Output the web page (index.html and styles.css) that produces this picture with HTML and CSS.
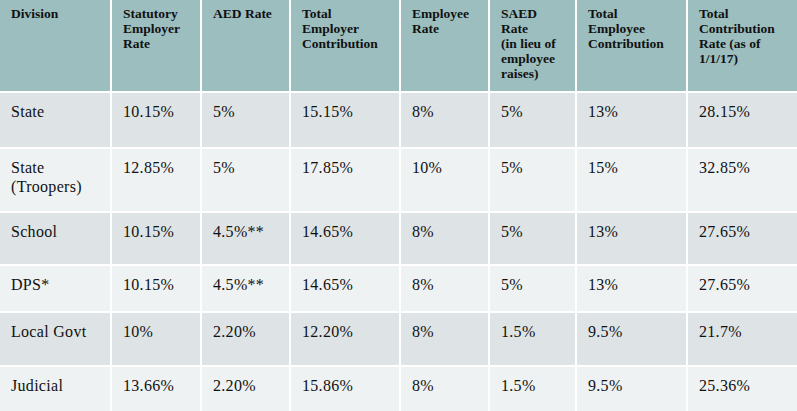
FILE: index.html
```html
<!DOCTYPE html>
<html>
<head>
<meta charset="utf-8">
<link rel="stylesheet" href="styles.css">
</head>
<body>
<div class="table">
  <div class="cell head">Division</div>
  <div class="cell head">Statutory Employer Rate</div>
  <div class="cell head">AED Rate</div>
  <div class="cell head">Total Employer Contribution</div>
  <div class="cell head">Employee Rate</div>
  <div class="cell head">SAED<br>Rate<br>(in lieu of employee raises)</div>
  <div class="cell head">Total Employee Contribution</div>
  <div class="cell head">Total Contribution Rate (as of 1/1/17)</div>

  <div class="cell odd">State</div>
  <div class="cell odd">10.15%</div>
  <div class="cell odd">5%</div>
  <div class="cell odd">15.15%</div>
  <div class="cell odd">8%</div>
  <div class="cell odd">5%</div>
  <div class="cell odd">13%</div>
  <div class="cell odd">28.15%</div>

  <div class="cell even">State (Troopers)</div>
  <div class="cell even">12.85%</div>
  <div class="cell even">5%</div>
  <div class="cell even">17.85%</div>
  <div class="cell even">10%</div>
  <div class="cell even">5%</div>
  <div class="cell even">15%</div>
  <div class="cell even">32.85%</div>

  <div class="cell odd">School</div>
  <div class="cell odd">10.15%</div>
  <div class="cell odd">4.5%**</div>
  <div class="cell odd">14.65%</div>
  <div class="cell odd">8%</div>
  <div class="cell odd">5%</div>
  <div class="cell odd">13%</div>
  <div class="cell odd">27.65%</div>

  <div class="cell even">DPS*</div>
  <div class="cell even">10.15%</div>
  <div class="cell even">4.5%**</div>
  <div class="cell even">14.65%</div>
  <div class="cell even">8%</div>
  <div class="cell even">5%</div>
  <div class="cell even">13%</div>
  <div class="cell even">27.65%</div>

  <div class="cell odd">Local Govt</div>
  <div class="cell odd">10%</div>
  <div class="cell odd">2.20%</div>
  <div class="cell odd">12.20%</div>
  <div class="cell odd">8%</div>
  <div class="cell odd">1.5%</div>
  <div class="cell odd">9.5%</div>
  <div class="cell odd">21.7%</div>

  <div class="cell even">Judicial</div>
  <div class="cell even">13.66%</div>
  <div class="cell even">2.20%</div>
  <div class="cell even">15.86%</div>
  <div class="cell even">8%</div>
  <div class="cell even">1.5%</div>
  <div class="cell even">9.5%</div>
  <div class="cell even">25.36%</div>
</div>
</body>
</html>
```
FILE: styles.css
```css
html, body {
  margin: 0;
  padding: 0;
  background: #ffffff;
}

body {
  width: 797px;
  height: 411px;
  overflow: hidden;
}

.table {
  display: grid;
  grid-template-columns: 110px 88px 87px 108px 87px 85px 109px 109px;
  grid-template-rows: 91px 54px 62px 51px 45px 52px 50px;
  column-gap: 2px;
  row-gap: 2px;
  width: 797px;
  background: #ffffff;
  font-family: "Liberation Serif", "Tinos", "DejaVu Serif", "Times New Roman", serif;
  color: #111111;
}

.cell {
  padding: 9px 12px 0 11px;
  font-size: 16px;
  line-height: 19px;
  letter-spacing: 0.3px;
}

.head {
  background: #9cbebf;
  font-weight: bold;
  font-size: 13.5px;
  line-height: 15px;
  letter-spacing: 0;
  padding-top: 6px;
  color: #111111;
}

.odd {
  background: #dee4e6;
}

.even {
  background: #eef2f3;
}
```
